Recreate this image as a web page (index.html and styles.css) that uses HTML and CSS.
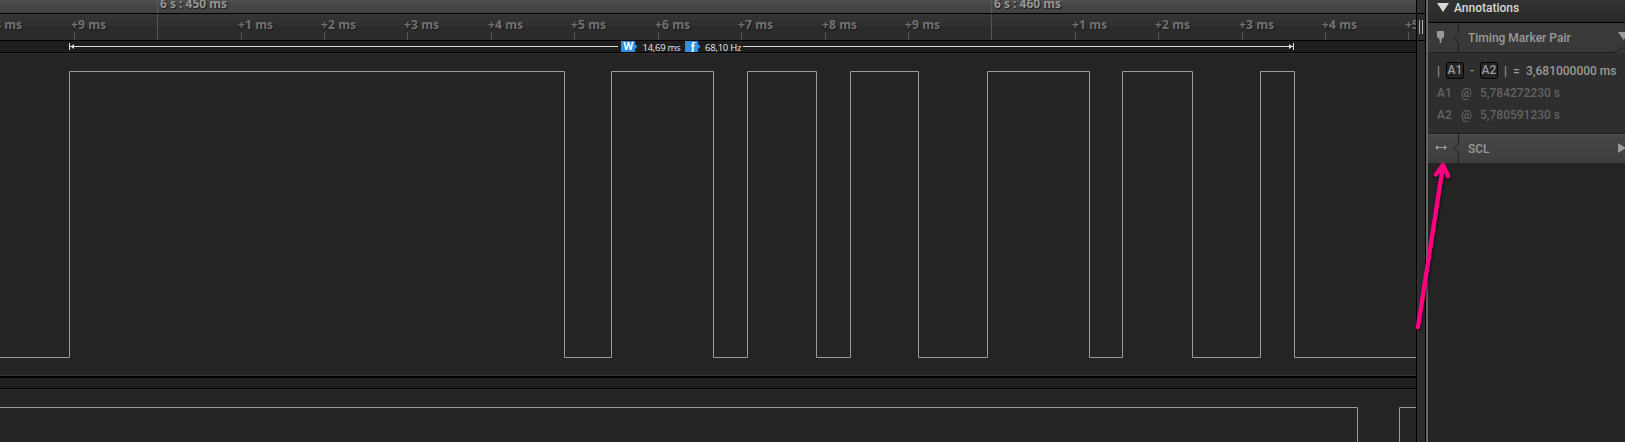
FILE: index.html
```
<!DOCTYPE html>
<html lang="en">
<head>
<meta charset="utf-8">
<title>Logic analyzer</title>
<link rel="stylesheet" href="styles.css">
</head>
<body>
<div class="app">
  <main class="plot">
    <div class="ruler major">
      <svg width="1416" height="13">
        <path class="tick dim" d="M157.5 0V13M991.5 0V13"/>
        <g class="major-text">
          <text x="160" y="7.500" textLength="67">6 s : 450 ms</text>
          <text x="994" y="7.500" textLength="67">6 s : 460 ms</text>
        </g>
      </svg>
    </div>
    <div class="ruler minor">
      <svg width="1416" height="26">
        <path class="tick" d="M157.5 0V26M991.5 0V26M74.5 18V26M241.5 18V26M324.5 18V26M407.5 18V26M491.5 18V26M574.5 18V26M658.5 18V26M741.5 18V26M825.5 18V26M908.5 18V26M1075.5 18V26M1158.5 18V26M1242.5 18V26M1325.5 18V26M1408.5 18V26"/>
        <g class="minor-text">
          <text x="-12.500" y="15" textLength="34.500">+8 ms</text>
          <text x="71" y="15" textLength="35">+9 ms</text>
          <text x="238" y="15" textLength="35">+1 ms</text>
          <text x="321" y="15" textLength="35">+2 ms</text>
          <text x="404" y="15" textLength="35">+3 ms</text>
          <text x="488" y="15" textLength="35">+4 ms</text>
          <text x="571" y="15" textLength="35">+5 ms</text>
          <text x="655" y="15" textLength="35">+6 ms</text>
          <text x="738" y="15" textLength="35">+7 ms</text>
          <text x="822" y="15" textLength="35">+8 ms</text>
          <text x="905" y="15" textLength="35">+9 ms</text>
          <text x="1072" y="15" textLength="35">+1 ms</text>
          <text x="1155" y="15" textLength="35">+2 ms</text>
          <text x="1239" y="15" textLength="35">+3 ms</text>
          <text x="1322" y="15" textLength="35">+4 ms</text>
          <text x="1405" y="15" textLength="35">+5 ms</text>
        </g>
      </svg>
    </div>
    <div class="measure">
      <svg width="1416" height="11">
        <path class="span" d="M69.5 2V9M70 5.5H618M743 5.5H1293M1293.500 2V9"/>
        <path class="head" d="M70.500 5.500L74 3V8ZM1292.500 5.500L1289 3V8Z"/>
        <path class="badge" d="M621 0H635V3L637.500 5.500L635 8V11H621ZM685 0H698V3L700.500 5.500L698 8V11H685Z"/>
        <text class="badge-text" x="623.500" y="9" textLength="10">W</text>
        <text class="badge-text f" x="689.500" y="9">ƒ</text>
        <text class="value" x="642.500" y="9.500" textLength="38">14,69 ms</text>
        <text class="value" x="705" y="9.500" textLength="36.500">68,10 Hz</text>
      </svg>
    </div>
    <div class="channel first">
      <svg width="1416" height="322">
        <path class="wave" d="M0 304.500H69.500V18.500H564.500V304.500H611.500V18.500H713.500V304.500H747.500V18.500H816.500V304.500H850.500V18.500H918.500V304.500H987.500V18.500H1089.500V304.500H1122.500V18.500H1192.500V304.500H1260.500V18.500H1294.500V304.500H1416"/>
      </svg>
    </div>
    <div class="gap"></div>
    <div class="channel">
      <svg width="1416" height="53">
        <path class="wave" d="M0 18.500H1357.500V60H1399.500V18.500H1416"/>
      </svg>
    </div>
  </main>
  <div class="splitter">
    <div class="cap"></div>
    <div class="grip"><i></i><i></i></div>
    <div class="rail"></div>
  </div>
  <aside class="panel">
    <header class="title">
      <svg width="12" height="9"><path d="M0 0H12L6 9Z" fill="#d8d8d8"/></svg>
      <span>Annotations</span>
    </header>
    <section class="row pair">
      <svg class="row-art" width="197" height="30">
        <path d="M9 9Q9 8 10 8H15Q16 8 16 9V14L13.300 16.500V20H11.700V16.500L9 14Z" fill="#999"/>
        <path class="notch" d="M30.500 0V9.500L26 14.500L30.500 19.500V29"/>
        <path d="M190 9H201L195.500 17Z" fill="#999"/>
        <path class="notch" d="M0 29.500H187L195 24.500L197 25.500"/>
      </svg>
      <span>Timing Marker Pair</span>
    </section>
    <section class="details">
      <div class="delta"><span class="bar">|</span><b>A1</b><span class="minus">-</span><b>A2</b><span class="bar2">|</span><span class="eq">=</span><span class="num">3,681000000 ms</span></div>
      <div class="stamp"><span>A1</span><span>@</span><span>5,784272230 s</span></div>
      <div class="stamp"><span>A2</span><span>@</span><span>5,780591230 s</span></div>
    </section>
    <section class="row scl">
      <svg class="row-art" width="197" height="29">
        <path d="M8 13.500H18" stroke="#999" fill="none"/>
        <path d="M7 13.500L10 11V16ZM19 13.500L16 11V16Z" fill="#999"/>
        <path class="notch" d="M30.500 0V9.500L26 14.500L30.500 19.500V29"/>
        <path d="M190 9V19L198 14Z" fill="#999"/>
      </svg>
      <span>SCL</span>
    </section>
  </aside>
  <svg class="pointer" width="60" height="190">
    <path d="M18 167L43 6M36 14.500L43 5L48 16"/>
  </svg>
</div>
</body>
</html>
```
FILE: styles.css
```
* { box-sizing: border-box; }
body { margin: 0; background: #242424; overflow: hidden; font-family: Roboto, "Liberation Sans", sans-serif; }
svg { display: block; }
.app { position: relative; display: flex; width: 1625px; height: 442px; }
.plot { width: 1416px; overflow: hidden; }
.ruler { border-bottom: 1px solid #000; overflow: hidden; }
.major { height: 14px; background: linear-gradient(#505050, #454545 40%, #424242); }
.minor { height: 27px; background: linear-gradient(#343434, #303030 45%, #2b2b2b 50%, #2c2c2c); }
.tick { stroke: #555; fill: none; }
.tick.dim { stroke: #5a5a5a; }
.ruler text { font-family: "Open Sans", sans-serif; font-size: 12px; font-weight: 700; text-shadow: 1px 1px 1px #1a1a1a; }
.major-text { fill: #959595; }
.minor-text { fill: #727272; }
.measure { height: 12px; background: #1e1e1e; border-bottom: 1px solid #000; }
.span { stroke: #ddd; fill: none; }
.head { fill: #ddd; }
.badge { fill: #2f8fe0; }
.badge-text { fill: #fff; font: bold 10px "Open Sans", sans-serif; }
.badge-text.f { font-size: 11px; }
.value { fill: #e6e6e6; font: 9.5px "Open Sans", sans-serif; }
.channel { overflow: hidden; height: 53px; background: #242424; border-top: 1px solid #2e2e2e; }
.channel svg { margin-top: -1px; }
.channel.first { height: 323px; border-bottom: 1px solid #343434; }
.wave { stroke: #9a9a9a; fill: none; }
.gap { height: 13px; background: #202020; border-top: 2px solid #000; border-bottom: 1px solid #000; }
.splitter { width: 12px; flex: none; display: flex; flex-direction: column; background: #2c2c2c; border-left: 1px solid #000; border-right: 2px solid #666; }
.cap { height: 14px; background: #303030; border-bottom: 1px solid #000; border-right: 1px solid #000; }
.grip { height: 27px; display: flex; gap: 2px; padding: 6px 0 6px 2px; border-bottom: 1px solid #000; border-right: 1px solid #000; }
.grip i { width: 1px; background: #aaa; }
.rail { flex: 1; border-left: 1px solid #333; border-right: 1px solid #000; }
.panel { width: 197px; flex: none; overflow: hidden; color: #999; font-size: 12px; font-weight: 500; background: #242424; }
.title { height: 23px; display: flex; gap: 5px; padding: 3px 0 0 9px; color: #d8d8d8; line-height: 10px; background: linear-gradient(#323232, #2a2a2a); border-bottom: 1px solid #000; }
.row { position: relative; padding-left: 40px; }
.row-art { position: absolute; left: 0; top: 0; }
.notch { fill: none; stroke: #202020; }
.pair { height: 30px; line-height: 30px; background: #393939; }
.details { height: 81px; padding-top: 9px; background: #2e2e2e; border-bottom: 1px solid #202020; }
.delta { display: flex; height: 18px; line-height: 18px; padding-left: 9px; white-space: nowrap; }
.delta b { width: 18px; height: 17px; line-height: 15px; text-align: center; font-weight: 500; border: 1px solid #000; border-radius: 3px; background: #252525; }
.bar { width: 9px; }
.minus { width: 16px; text-align: center; }
.bar2 { width: 15px; padding-left: 6px; }
.eq { width: 13px; }
.stamp { display: grid; grid-template-columns: 24px 19px 1fr; height: 22px; line-height: 26px; padding-left: 9px; color: #636363; }
.scl { height: 29px; line-height: 30px; background: linear-gradient(#505050, #454545 10%, #3e3e3e); }
.pointer { position: absolute; left: 1400px; top: 160px; fill: none; stroke: #ff0080; stroke-width: 4.4; stroke-linecap: round; stroke-linejoin: round; filter: drop-shadow(1px 2px 1px rgba(0, 0, 0, .5)); }
```
